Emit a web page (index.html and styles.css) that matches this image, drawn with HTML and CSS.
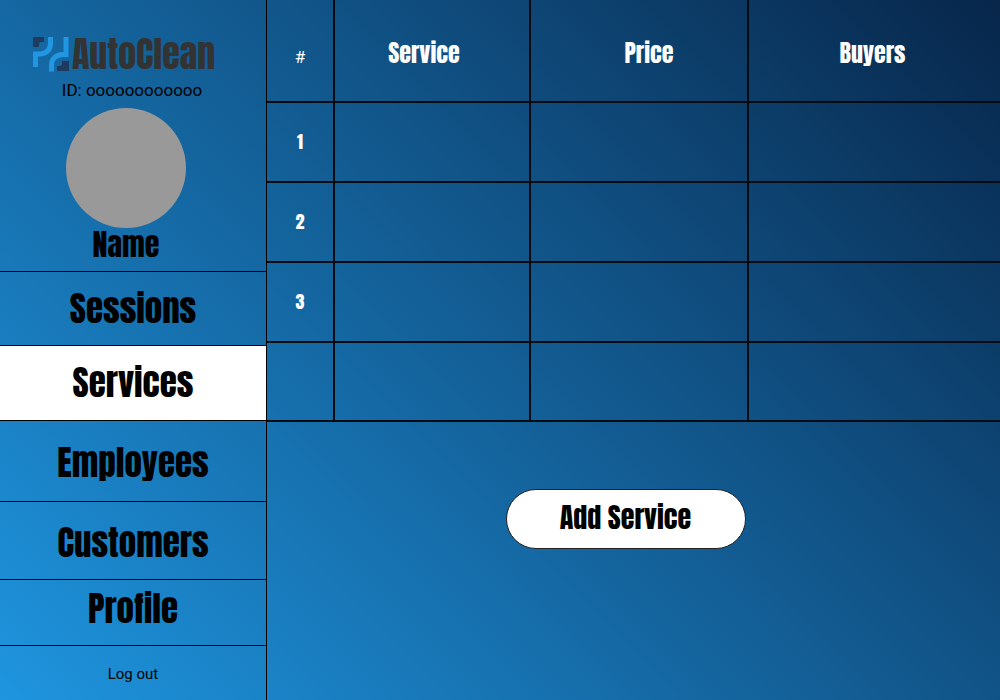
FILE: index.html
```html
<!DOCTYPE html>
<html lang="en">
<head>
<meta charset="utf-8">
<title>AutoClean – Services</title>
<link rel="stylesheet" href="styles.css">
</head>
<body>
<div class="app">
  <aside class="sidebar">
    <header class="profile">
      <div class="brand">
        <svg class="brand-mark" viewBox="0 0 36 36" aria-hidden="true">
          <path fill="#1e3a5f" d="M0 1h11v5H8q-2 0-2 2v3H0zM36 35H24v-5h3q2 0 2-2v-3h7z"/>
          <path fill="none" stroke="#2196e3" stroke-width="5" d="M2.500 31V18H7Q17.500 17 17.500 7V1M35.500 18.500H29Q18.500 20 18.500 29V35.500M33 1V18"/>
        </svg>
        <span class="brand-name">AutoClean</span>
      </div>
      <p class="user-id">ID: oooooooooooo</p>
      <div class="avatar"></div>
      <p class="user-name">Name</p>
    </header>
    <nav class="menu">
      <a class="item sessions" href="#sessions">Sessions</a>
      <a class="item services" href="#services" aria-current="page">Services</a>
      <a class="item employees" href="#employees">Employees</a>
      <a class="item customers" href="#customers">Customers</a>
      <a class="item account" href="#profile">Profile</a>
      <a class="logout" href="#logout">Log out</a>
    </nav>
  </aside>
  <main class="content">
    <table class="services-table">
      <colgroup><col class="col-number"><col class="col-service"><col class="col-price"><col class="col-buyers"></colgroup>
      <thead>
        <tr><th class="hash">#</th><th class="service-head">Service</th><th class="price-head">Price</th><th class="buyers-head">Buyers</th></tr>
      </thead>
      <tbody>
        <tr><td>1</td><td></td><td></td><td></td></tr>
        <tr><td>2</td><td></td><td></td><td></td></tr>
        <tr><td>3</td><td></td><td></td><td></td></tr>
        <tr class="empty"><td></td><td></td><td></td><td></td></tr>
      </tbody>
    </table>
    <button class="add" type="button">Add Service</button>
  </main>
</div>
</body>
</html>
```
FILE: styles.css
```css
* { box-sizing: border-box; }
body {
  margin: 0;
  color: #000;
  font-family: Anton, Impact, "Roboto Condensed", Roboto, sans-serif;
}
p { margin: 0; }
.app {
  display: flex;
  min-height: 100vh;
  background: linear-gradient(45deg, #1e95df, #07264a);
}
.sidebar {
  display: flex;
  flex-direction: column;
  flex: 0 0 267px;
  border-right: 1px solid #000;
}
.profile {
  display: flex;
  flex-direction: column;
  align-items: center;
  padding: 36px 14px 12px 0;
}
.brand { display: flex; align-items: center; gap: 3px; height: 36px; margin-right: 4px; }
.brand-mark { width: 36px; height: 36px; }
.brand-name {
  color: #333;
  font-size: 36px;
  font-weight: 400;
  line-height: 36px;
}
.user-id {
  margin-top: 8px;
  padding-left: 12px;
  font: 17px/20px Roboto, sans-serif;
}
.avatar {
  width: 120px;
  height: 120px;
  margin-top: 8px;
  border-radius: 50%;
  background: #999;
}
.user-name {
  height: 31px;
  font-size: 30px;
  font-weight: 400;
  line-height: 34px;
}
.menu { display: flex; flex-direction: column; flex: 1; }
.item, .logout {
  display: flex;
  align-items: center;
  justify-content: center;
  border-top: 1px solid #000;
  color: #000;
  text-decoration: none;
}
.item {
  font-size: 35px;
  font-weight: 400;
  line-height: 40px;
}
.sessions { height: 74px; }
.services { height: 75px; background: #fff; }
.employees { height: 81px; padding-top: 4px; }
.customers { height: 78px; padding-top: 4px; }
.account { height: 66px; padding-bottom: 8px; }
.logout { flex: 1; padding-top: 2px; font: 15px/20px Roboto, sans-serif; }
.content {
  display: flex;
  flex-direction: column;
  align-items: center;
  flex: 1;
}
.services-table {
  width: 100%;
  table-layout: fixed;
  border-collapse: separate;
  border-spacing: 0;
  color: #fff;
}
.col-number { width: 68px; }
.col-service { width: 196px; }
.col-price { width: 218px; }
th, td {
  border-bottom: 2px solid #020a12;
  border-right: 2px solid #020a12;
  padding: 0;
  text-align: center;
  font-weight: 400;
}
th:last-child, td:last-child { border-right: 0; }
th { height: 103px; padding-top: 4px; font-size: 24px; }
td { height: 80px; padding-bottom: 2px; font-size: 18px; }
.empty td { height: 79px; }
.hash { padding-top: 12px; font: 17px/20px Roboto, sans-serif; }
.service-head { padding-right: 16px; }
.price-head { padding-left: 20px; }
.buyers-head { padding-right: 4px; }
.add {
  width: 240px;
  height: 60px;
  margin: 67px 16px 0 0;
  padding: 0 0 4px;
  border: 1px solid #222;
  border-radius: 30px;
  background: #fff;
  color: #000;
  font: 400 28px/32px Anton, Impact, "Roboto Condensed", Roboto, sans-serif;
}
```
